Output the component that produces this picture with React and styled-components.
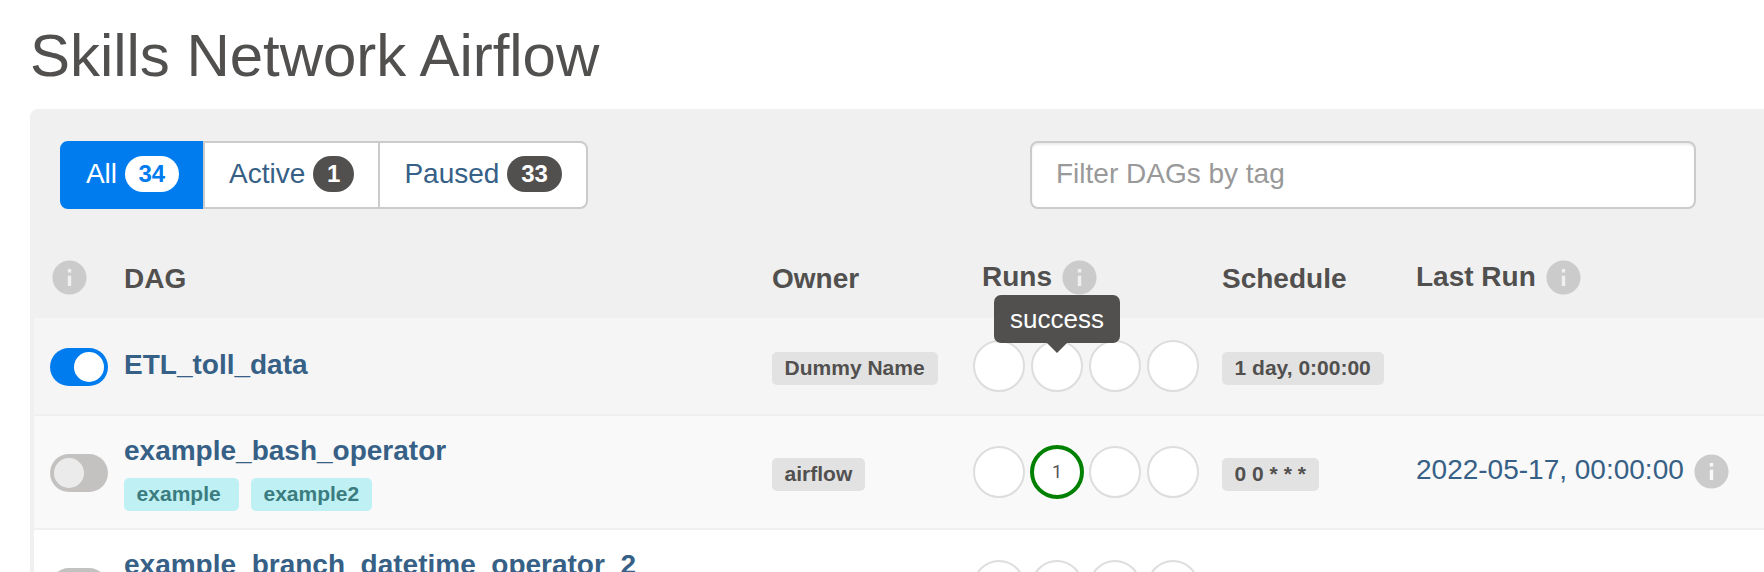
import React from 'react';
import styled, { createGlobalStyle } from 'styled-components';

const Global = createGlobalStyle`
  * { box-sizing: border-box; }
  html, body { margin: 0; height: 100%; overflow: hidden; }
  body {
    background: #fff;
    color: #51504f;
    font: 28px/40px "Liberation Sans", Arial, sans-serif;
  }
`;

const Page = styled.main`
  height: 572px;
  padding: 23px 0 0 30px;
  overflow: hidden;
`;

const Title = styled.h2`
  margin: 0 0 20px;
  font-size: 60px;
  font-weight: 400;
  line-height: 66px;
  letter-spacing: -0.04px;
`;

const Panel = styled.section`
  background: #f0f0f0;
  border-radius: 8px 0 0 0;
  padding: 32px 0 0 4px;
`;

const Toolbar = styled.div`
  display: flex;
  justify-content: space-between;
  width: 1662px;
  padding-left: 26px;
`;

const Filters = styled.nav`
  display: flex;
`;

const FilterButton = styled.a`
  height: 68px;
  padding: 11px 24px 13px;
  border: 2px solid ${(p) => (p.$active ? '#017cee' : '#cbcbcb')};
  background: ${(p) => (p.$active ? '#017cee' : '#fff')};
  color: ${(p) => (p.$active ? '#fff' : '#366086')};
  white-space: pre;
  display: flex;
  align-items: center;
  & + & { margin-left: -2px; }
  &:first-child { border-radius: 8px 0 0 8px; letter-spacing: -0.1px; }
  &:last-child { border-radius: 0 8px 8px 0; }
`;

const Count = styled.span`
  padding: 6px 14px;
  border-radius: 20px;
  font-size: 24px;
  font-weight: 700;
  line-height: 24px;
  background: ${(p) => (p.$active ? '#fff' : '#51504f')};
  color: ${(p) => (p.$active ? '#017cee' : '#fff')};
`;

const TagFilter = styled.input`
  width: 666px;
  height: 68px;
  padding: 11px 24px 13px;
  border: 2px solid #cbcbcb;
  border-radius: 8px;
  background: #fff;
  box-shadow: inset 0 2px 2px rgba(0, 0, 0, 0.075);
  font: inherit;
  &::placeholder { color: #999; opacity: 1; }
`;

const Columns = styled.div`
  display: grid;
  grid-template-columns: 90px 648px 201px 249px 194px 346px minmax(0, 1fr);
`;

const Head = styled(Columns)`
  height: 109px;
  padding-top: 46px;
  font-weight: 700;
`;

const HeadCell = styled.div`
  display: flex;
  align-items: center;
  height: 44px;
  padding-top: ${(p) => (p.$withIcon ? '0' : '4px')};
  padding-left: ${(p) => p.$indent || 0}px;
`;

const InfoSvg = styled.svg`
  width: 41px;
  height: 41px;
  flex: none;
  margin-left: ${(p) => p.$gap || 0}px;
  fill: #cbcbcb;
`;

const Row = styled(Columns)`
  height: ${(p) => p.$height}px;
  background: ${(p) => p.$bg};
  border-bottom: 2px solid #f0f0f0;
`;

const Cell = styled.div`
  display: flex;
  align-items: center;
  padding-top: ${(p) => p.$drop || 0}px;
  padding-bottom: ${(p) => p.$lift || 0}px;
  padding-left: ${(p) => p.$indent || 0}px;
  white-space: nowrap;
`;

const Switch = styled.span`
  display: flex;
  justify-content: ${(p) => (p.$on ? 'flex-end' : 'flex-start')};
  width: 58px;
  height: 38px;
  padding: 4px;
  border-radius: 19px;
  background: ${(p) => (p.$on ? '#017cee' : '#c4c2c1')};
  &::after {
    content: '';
    width: 30px;
    height: 30px;
    border-radius: 50%;
    background: ${(p) => (p.$on ? '#fff' : '#ebebeb')};
  }
`;

const DagCell = styled.div`
  display: flex;
  flex-direction: column;
  justify-content: center;
  padding-bottom: 2px;
`;

const DagName = styled.a`
  color: #366086;
  font-weight: 700;
  line-height: 40px;
`;

const Tags = styled.div`
  display: flex;
  gap: 12px;
  height: 33px;
  margin-top: 7px;
`;

const Label = styled.span`
  height: 33px;
  padding: 5px ${(p) => (p.$tag ? '12.4px' : '13px')} 7px 12.6px;
  border-radius: 5px;
  background: ${(p) => (p.$tag ? '#bff0f3' : '#e2e2e2')};
  color: ${(p) => (p.$tag ? '#3b7c80' : '#51504f')};
  font-size: 21px;
  font-weight: 700;
  line-height: 21px;
  white-space: pre;
`;

const Runs = styled.div`
  position: relative;
  display: flex;
  align-items: center;
  gap: 6px;
`;

const Run = styled.span`
  display: flex;
  align-items: center;
  justify-content: center;
  width: 52px;
  height: 52px;
  border: 2px solid #ddd;
  border-radius: 50%;
  background: #fff;
  ${(p) => p.$success && 'width: 54px; height: 54px; margin: 0 -1px; border: 4px solid #008000;'}
  color: #555;
  font-family: Roboto, "Liberation Sans", sans-serif;
  font-size: 18px;
`;

const Tooltip = styled.span`
  position: absolute;
  z-index: 1;
  left: 21px;
  top: -23px;
  width: 126px;
  height: 48px;
  border-radius: 7px;
  background: #51504f;
  color: #fff;
  font-size: 26px;
  line-height: 48px;
  text-align: center;
  &::after {
    content: '';
    position: absolute;
    top: 48px;
    left: 53px;
    border: 10px solid transparent;
    border-bottom: 0;
    border-top-color: #51504f;
  }
`;

const RunDate = styled.a`
  color: #366086;
  margin-top: -3px;
`;

const Info = ({ gap }) => (
  <InfoSvg $gap={gap} viewBox="0 0 24 24">
    <path d="M12 2C6.48 2 2 6.48 2 12s4.48 10 10 10 10-4.48 10-10S17.52 2 12 2zm1 15h-2v-6h2v6zm0-8h-2V7h2v2z" />
  </InfoSvg>
);

const filters = [
  { name: 'All', count: 34, active: true },
  { name: 'Active', count: 1 },
  { name: 'Paused', count: 33 },
];

const dags = [
  { name: 'ETL_toll_data', on: true, owner: 'Dummy Name', runs: ['', '', '', ''], schedule: '1 day, 0:00:00', tooltip: 'success', height: 98, bg: '#f5f5f5' },
  { name: 'example_bash_operator', tags: ['example ', 'example2'], owner: 'airflow', runs: ['', '1', '', ''], schedule: '0 0 * * *', lastRun: '2022-05-17, 00:00:00', height: 114, bg: '#f9f9f9' },
  { name: 'example_branch_datetime_operator_2', tags: [], runs: ['', '', '', ''], height: 114, bg: '#fff' },
];

const DagRow = ({ dag }) => (
  <Row $height={dag.height} $bg={dag.bg}>
    <Cell $indent={16} $drop={2}><Switch $on={dag.on} /></Cell>
    <DagCell>
      <DagName>{dag.name}</DagName>
      {dag.tags && <Tags>{dag.tags.map((t) => <Label key={t} $tag>{t}</Label>)}</Tags>}
    </DagCell>
    <Cell $drop={5}>{dag.owner && <Label>{dag.owner}</Label>}</Cell>
    <Runs>
      {dag.runs.map((r, i) => <Run key={i} $success={r !== ''}>{r}</Run>)}
      {dag.tooltip && <Tooltip>{dag.tooltip}</Tooltip>}
    </Runs>
    <Cell $drop={5}>{dag.schedule && <Label>{dag.schedule}</Label>}</Cell>
    <Cell $lift={2}>{dag.lastRun && <><RunDate>{dag.lastRun}</RunDate><Info gap={7} /></>}</Cell>
  </Row>
);

export default function App() {
  return (
    <Page>
      <Global />
      <Title>Skills Network Airflow</Title>
      <Panel>
        <Toolbar>
          <Filters>
            {filters.map((f) => (
              <FilterButton key={f.name} $active={f.active}>
                <span>{f.name} </span><Count $active={f.active}>{f.count}</Count>
              </FilterButton>
            ))}
          </Filters>
          <TagFilter placeholder="Filter DAGs by tag" />
        </Toolbar>
        <Head>
          <HeadCell $withIcon $indent={15}><Info /></HeadCell>
          <HeadCell>DAG</HeadCell>
          <HeadCell>Owner</HeadCell>
          <HeadCell $withIcon $indent={9}>Runs<Info gap={7} /></HeadCell>
          <HeadCell>Schedule</HeadCell>
          <HeadCell $withIcon>Last Run<Info gap={7} /></HeadCell>
        </Head>
        {dags.map((d) => <DagRow key={d.name} dag={d} />)}
      </Panel>
    </Page>
  );
}
